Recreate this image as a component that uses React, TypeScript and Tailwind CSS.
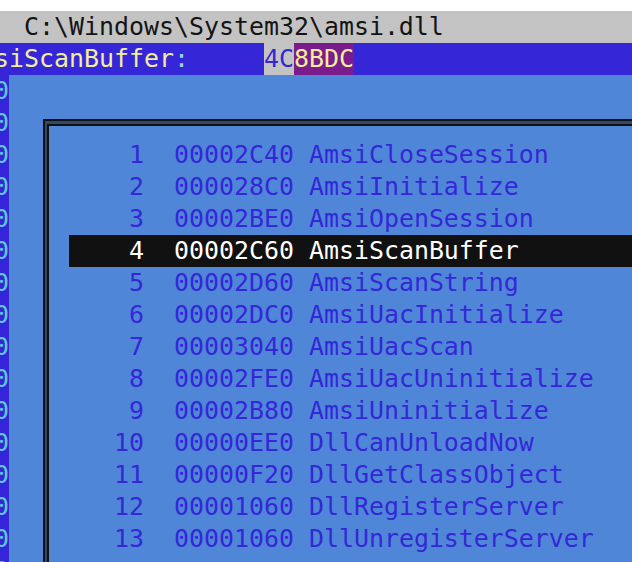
import React from "react"

const exportsList: [number, string, string][] = [
  [1, "00002C40", "AmsiCloseSession"],
  [2, "000028C0", "AmsiInitialize"],
  [3, "00002BE0", "AmsiOpenSession"],
  [4, "00002C60", "AmsiScanBuffer"],
  [5, "00002D60", "AmsiScanString"],
  [6, "00002DC0", "AmsiUacInitialize"],
  [7, "00003040", "AmsiUacScan"],
  [8, "00002FE0", "AmsiUacUninitialize"],
  [9, "00002B80", "AmsiUninitialize"],
  [10, "00000EE0", "DllCanUnloadNow"],
  [11, "00000F20", "DllGetClassObject"],
  [12, "00001060", "DllRegisterServer"],
  [13, "00001060", "DllUnregisterServer"],
]

const App = () => {
  const selected = 4
  return (
    <div className="w-[632px] h-[562px] overflow-hidden bg-white font-['DejaVu_Sans_Mono',monospace] text-[24.92px] leading-[32px]">
      <div className="h-[11px]" />
      {/* path bar */}
      <div className="h-8 bg-[#c3c3c3] text-[#141414] whitespace-pre pl-[24px]">
        C:\Windows\System32\amsi.dll
      </div>
      {/* name / bytes bar */}
      <div className="h-8 bg-[#3527d7] whitespace-pre flex">
        <span className="ml-[-36px] text-[#f3ee9a]">AmsiScanBuffer</span>
        <span className="text-[#9ad6d4]">:</span>
        <span>     </span>
        <span className="bg-[#c3c3c3] text-[#3527d7]">4C</span>
        <span className="bg-[#7a1c8c] text-[#f3ee9a]">8BDC</span>
      </div>
      <div className="flex h-[487px]">
        {/* offset column edge */}
        <div className="w-[9px] bg-[#3527d7] overflow-hidden shrink-0">
          {Array.from({ length: 16 }).map((_, i) => (
            <div key={i} className="h-8 ml-[-6px] text-[#5fc8d6]">0</div>
          ))}
        </div>
        <div className="flex-1 bg-[#4f86d8] pl-[34px] pt-[44px]">
          {/* double frame */}
          <div className="h-full border-l-2 border-t-2 border-[#111] bg-[#33476b] pl-[2px] pt-[3px]">
            <div className="h-full border-l-2 border-t-2 border-[#111] bg-[#4f86d8] pl-[20px] pt-[13px]">
              {exportsList.map(([n, addr, name]) => (
                <div
                  key={n}
                  className={`h-8 whitespace-pre ${n === selected ? "bg-[#111111] text-white" : "text-[#3527d7]"}`}
                >
                  {`${String(n).padStart(5)}  ${addr} ${name}`}
                </div>
              ))}
            </div>
          </div>
        </div>
      </div>
    </div>
  )
}

export default App
